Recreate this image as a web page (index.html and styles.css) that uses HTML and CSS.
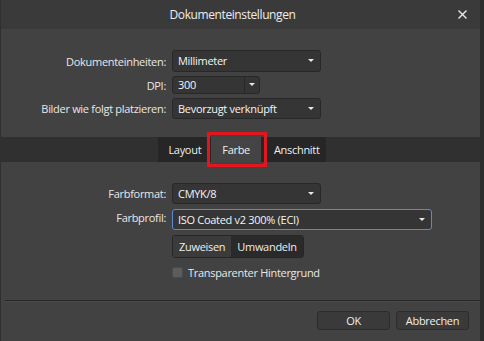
FILE: index.html
```html
<!DOCTYPE html>
<html>
<head>
    <title>Dokumenteinstellungen</title>
    <link rel="stylesheet" href="styles.css">
</head>
<body>
    <div class="dialog">
        <div class="titlebar">
            <span class="title">Dokumenteinstellungen</span>
            <svg class="close" width="9" height="9" viewBox="0 0 9 9">
                <path d="M0.5 0.5 L8.5 8.5 M8.5 0.5 L0.5 8.5" stroke="#e8e8e8" stroke-width="1.4" fill="none"/>
            </svg>
        </div>

        <div class="form form-top">
            <label>Dokumenteinheiten:</label>
            <div class="select row-a">Millimeter<span class="arrow"></span></div>
            <label>DPI:</label>
            <div class="spin row-b"><span class="spin-value">300</span><span class="spin-btn"><span class="arrow"></span></span></div>
            <label>Bilder wie folgt platzieren:</label>
            <div class="select row-c">Bevorzugt verknüpft<span class="arrow"></span></div>
        </div>

        <div class="tabs">
            <div class="tab-group">
                <span class="tab">Layout</span>
                <span class="tab active">Farbe</span>
                <span class="tab">Anschnitt</span>
            </div>
        </div>

        <div class="form form-color">
            <label>Farbformat:</label>
            <div class="select row-d">CMYK/8<span class="arrow"></span></div>
            <label>Farbprofil:</label>
            <div class="select wide focus row-e">ISO Coated v2 300% (ECI)<span class="arrow"></span></div>
            <span></span>
            <div class="segmented">
                <span class="seg">Zuweisen</span>
                <span class="seg on">Umwandeln</span>
            </div>
            <span></span>
            <div class="check-row"><span class="checkbox"></span>Transparenter Hintergrund</div>
        </div>

        <div class="footer">
            <div class="separator"></div>
            <div class="buttons">
                <button class="btn">OK</button>
                <button class="btn">Abbrechen</button>
            </div>
        </div>
    </div>
</body>
</html>
```

FILE: styles.css
```css
html, body { margin: 0; padding: 0; }
body { width: 484px; height: 341px; background: #2d2d2d; font-family: "Open Sans", "Noto Sans", sans-serif; font-size: 11px; letter-spacing: -0.3px; color: #e8e8e8; overflow: hidden; }
.dialog { width: 479px; height: 341px; background: #424242; border-left: 1px solid #303030; display: flex; flex-direction: column; }

.titlebar { height: 29px; background: #3a3a3a; display: flex; align-items: center; position: relative; }
.title { flex: 1; text-align: center; padding-right: 16px; font-size: 12px; letter-spacing: -0.4px; color: #ededed; }
.close { position: absolute; right: 13px; top: 10px; }

.form { display: grid; grid-template-columns: 165px auto; column-gap: 6px; align-items: center; justify-items: start; }
.form label { justify-self: end; color: #e8e8e8; }
.form-top { margin-top: 21px; row-gap: 4px; }
.form-color { margin-top: 21px; }

.select { position: relative; box-sizing: border-box; width: 149px; height: 21px; line-height: 19px; padding-left: 5px; background: #353535; border: 1px solid #282828; border-radius: 3px; color: #f4f4f4; }
.select.wide { width: 260px; }
.select.focus { border-color: #5a8ad4; }
.row-a { height: 22px; line-height: 20px; }
.row-d { height: 21px; }
.row-e { margin-top: 5px; }
.arrow { position: absolute; right: 6px; top: 8px; width: 0; height: 0; border-left: 3px solid transparent; border-right: 3px solid transparent; border-top: 3px solid #e8e8e8; }

.spin { box-sizing: border-box; width: 88px; height: 18px; display: flex; background: #353535; border: 1px solid #282828; border-radius: 3px; color: #f4f4f4; }
.spin-value { flex: 1; padding-left: 5px; line-height: 16px; }
.spin-btn { position: relative; width: 14px; border-left: 1px solid #282828; }
.spin-btn .arrow { right: 4px; top: 6px; }

.tabs { margin-top: 18px; height: 25px; background: #303030; display: flex; justify-content: center; }
.tab-group { display: flex; background: #262626; margin-left: 3px; }
.tab { position: relative; line-height: 25px; padding: 0 6px 0 10px; color: #efefef; }
.tab.active { background: #444444; margin: 0 3px 0 4px; padding: 0 11px; }
.tab.active::after { content: ""; position: absolute; left: -4px; right: -6px; top: -5px; bottom: -5px; border: 3px solid #e3151e; }

.segmented { margin-top: 5px; height: 21px; display: flex; border: 1px solid #262626; border-radius: 3px; overflow: hidden; }
.seg { line-height: 21px; padding: 0 6px; background: #3b3b3b; color: #eeeeee; }
.seg.on { background: #2a2a2a; }

.check-row { margin-top: 7px; display: flex; align-items: center; color: #e8e8e8; }
.checkbox { box-sizing: border-box; width: 11px; height: 11px; margin-right: 5px; background: #5c5c5c; border: 1px solid #4a4a4a; border-radius: 2px; }

.footer { margin-top: auto; }
.separator { margin-left: 4px; height: 1px; background: #262626; border-bottom: 1px solid #4a4a4a; }
.buttons { display: flex; justify-content: flex-end; gap: 6px; padding: 9px 11px 11px 0; }
.btn { box-sizing: border-box; width: 73px; height: 19px; padding: 0; background: #3a3a3a; border: 1px solid #2c2c2c; border-radius: 3px; color: #eeeeee; font-family: inherit; font-size: 11px; letter-spacing: inherit; }
```
